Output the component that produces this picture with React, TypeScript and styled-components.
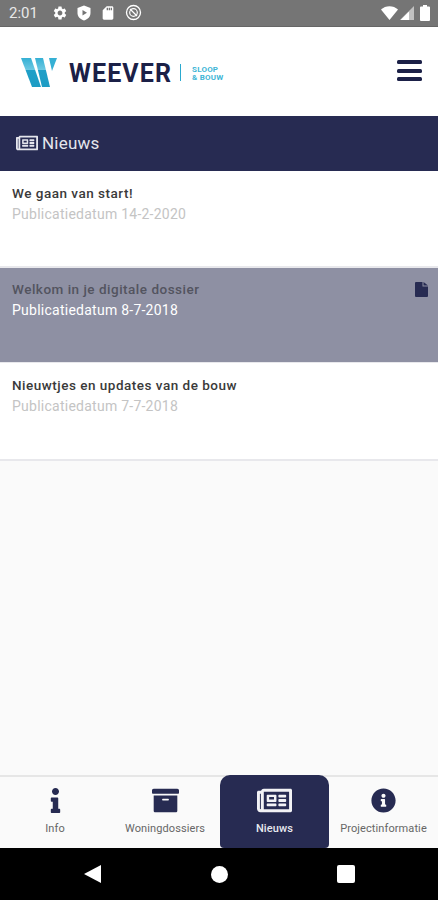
import React from 'react';
import styled, { createGlobalStyle } from 'styled-components';
import { FaArchive, FaInfo, FaInfoCircle, FaRegNewspaper } from 'react-icons/fa';
import { MdSdCard, MdSettings } from 'react-icons/md';

const NAVY = '#272b52';

const NEWS = [
  { title: 'We gaan van start!', date: '14-2-2020' },
  { title: 'Welkom in je digitale dossier', date: '8-7-2018', active: true },
  { title: 'Nieuwtjes en updates van de bouw', date: '7-7-2018' },
];

const TABS = [
  { label: 'Info', icon: <FaInfo size={25} /> },
  { label: 'Woningdossiers', icon: <FaArchive size={27} /> },
  { label: 'Nieuws', icon: <FaRegNewspaper size={35} />, active: true },
  { label: 'Projectinformatie', icon: <FaInfoCircle size={25} /> },
];

const Logo: React.FC = () => (
  <LogoMark viewBox="0 0 36 29">
    <defs>
      <linearGradient id="stripe" x1="0" y1="0" x2="0" y2="1">
        <stop offset="0" stopColor="#35b0d4" />
        <stop offset="0.4" stopColor="#6cc8e2" />
        <stop offset="0.43" stopColor="#1f9fc8" />
        <stop offset="1" stopColor="#1c9cc4" />
      </linearGradient>
    </defs>
    <polygon points="0,0 10,0 20,29 11,29" fill="url(#stripe)" />
    <polygon points="14,0 22,0 29,29 21,29" fill="url(#stripe)" />
    <polygon points="28,0 36,0 31,13" fill="#35b0d4" />
  </LogoMark>
);

const StatusIcons: React.FC = () => (
  <StatusLeft>
    <MdSettings size={16} />
    <svg width="14" height="16" viewBox="0 0 14 16">
      <path d="M7 0.5 13.5 3v5c0 3.6-2.7 6.3-6.5 7.5C3.2 14.3.5 11.6.5 8V3z" fill="#fff" />
      <path d="M5.5 5v5.5L10 7.8z" fill="#757575" />
    </svg>
    <MdSdCard size={16} />
    <svg width="17" height="17" viewBox="0 0 17 17" fill="none" stroke="#fff">
      <circle cx="8.5" cy="8.5" r="7" strokeWidth="1.3" />
      <circle cx="8.5" cy="8.5" r="3.8" strokeWidth="1.2" />
      <path d="M5 5l7 7" strokeWidth="1.3" />
    </svg>
  </StatusLeft>
);

const StatusRight: React.FC = () => (
  <StatusRightGroup>
    <svg width="17" height="14" viewBox="0 0 17 14"><path d="M0 3.5C4.5-1 12.5-1 17 3.5L8.5 14z" fill="#fff" /></svg>
    <SignalIcon width="14" height="14" viewBox="0 0 14 14">
      <path d="M14 0v14H0z" fill="#fff" fillOpacity="0.55" />
      <path d="M9 6v8H0.5l8-8z" fill="#fff" />
    </SignalIcon>
    <svg width="10" height="16" viewBox="0 0 10 16"><path d="M3 0h4v1.5h2a1 1 0 0 1 1 1V15a1 1 0 0 1-1 1H1a1 1 0 0 1-1-1V2.5a1 1 0 0 1 1-1h2z" fill="#fff" /></svg>
  </StatusRightGroup>
);

const App: React.FC = () => (
  <>
    <GlobalStyle />
    <Screen>
      <StatusBar>
        <StatusGroup>
          <Clock>2:01</Clock>
          <StatusIcons />
        </StatusGroup>
        <StatusRight />
      </StatusBar>
      <Header>
        <Brand>
          <Logo />
          <BrandName>WEEVER</BrandName>
          <BrandDivider />
          <BrandSub>
            <span>SLOOP</span>
            <span>&amp; BOUW</span>
          </BrandSub>
        </Brand>
        <Hamburger>
          <span />
          <span />
          <span />
        </Hamburger>
      </Header>
      <TitleBar>
        <FaRegNewspaper size={22} />
        <Title>Nieuws</Title>
      </TitleBar>
      <Content>
        {NEWS.map((item) => (
          <NewsRow key={item.title} $active={item.active}>
            <NewsText>
              <NewsTitle $active={item.active}>{item.title}</NewsTitle>
              <NewsDate $active={item.active}>Publicatiedatum {item.date}</NewsDate>
            </NewsText>
            {item.active && (
              <FileIcon viewBox="0 0 13 15">
                <path d="M0 1a1 1 0 0 1 1-1h6.5v4.5H13V14a1 1 0 0 1-1 1H1a1 1 0 0 1-1-1z" />
                <path d="M8.5 0 13 3.5H8.5z" />
              </FileIcon>
            )}
          </NewsRow>
        ))}
      </Content>
      <TabBar>
        {TABS.map((tab) => (
          <Tab key={tab.label} $active={tab.active}>
            <TabIcon>{tab.icon}</TabIcon>
            <TabLabel $active={tab.active}>{tab.label}</TabLabel>
          </Tab>
        ))}
      </TabBar>
      <NavBar>
        <svg width="17" height="18" viewBox="0 0 17 18"><path d="M17 0v18L0 9z" fill="#fff" /></svg>
        <NavCircle />
        <NavSquare />
      </NavBar>
    </Screen>
  </>
);

export default App;

const GlobalStyle = createGlobalStyle`
  html, body {
    margin: 0;
    padding: 0;
    background: #fafafa;
  }
  * {
    box-sizing: border-box;
  }
`;

const Screen = styled.div`
  display: flex;
  flex-direction: column;
  width: 438px;
  height: 900px;
  overflow: hidden;
  font-family: Roboto, "Liberation Sans", sans-serif;
  background: #fafafa;
`;

const StatusBar = styled.div`
  display: flex;
  align-items: center;
  justify-content: space-between;
  height: 27px;
  padding: 0 8px 1px 9px;
  background: #757575;
  border-bottom: 1px solid #666;
  color: #fff;
`;

const StatusGroup = styled.div`
  display: flex;
  align-items: center;
  gap: 14px;
`;

const StatusLeft = styled.div`
  display: flex;
  align-items: center;
  gap: 9px;
`;

const StatusRightGroup = styled.div`
  display: flex;
  align-items: center;
  gap: 2px;
`;

const SignalIcon = styled.svg`
  margin-right: 4px;
`;

const Clock = styled.span`
  font-size: 15px;
  color: #e8e8e8;
`;

const Header = styled.div`
  display: flex;
  align-items: center;
  justify-content: space-between;
  height: 89px;
  padding: 0 16px 0 21px;
  background: #fff;
`;

const Brand = styled.div`
  display: flex;
  align-items: center;
  margin-top: 2px;
`;

const LogoMark = styled.svg`
  width: 36px;
  height: 29px;
`;

const BrandName = styled.span`
  margin: 1px 0 0 12px;
  font-size: 25px;
  font-weight: 700;
  letter-spacing: 1.1px;
  color: #1b2047;
`;

const BrandDivider = styled.div`
  width: 1px;
  height: 17px;
  margin: 0 11px 0 8px;
  background: #2aa9cf;
`;

const BrandSub = styled.div`
  display: flex;
  flex-direction: column;
  margin-top: 3px;
  font-size: 8px;
  line-height: 8px;
  font-weight: 700;
  letter-spacing: 0.2px;
  color: #3fb6d6;
`;

const Hamburger = styled.div`
  display: flex;
  flex-direction: column;
  gap: 4.5px;
  margin-bottom: 2px;

  span {
    display: block;
    width: 25px;
    height: 4px;
    border-radius: 1.5px;
    background: #1b2047;
  }
`;

const TitleBar = styled.div`
  display: flex;
  align-items: center;
  gap: 4px;
  height: 55px;
  padding: 0 0 2px 16px;
  background: ${NAVY};
  color: #e4e5ec;
`;

const Title = styled.span`
  font-size: 17px;
  letter-spacing: 0.2px;
`;

const Content = styled.div`
  flex: 1;
  display: grid;
  grid-template-rows: 97px 95px 98px;
  align-content: start;
`;

const NewsRow = styled.div<{ $active?: boolean }>`
  display: flex;
  justify-content: space-between;
  padding: 14px 10px 0 12px;
  background: ${({ $active }) => ($active ? '#8e90a3' : '#fff')};
  border-bottom: 2px solid #e8e8ec;

  &:nth-child(2) {
    padding-top: 13px;
    border-bottom-width: 1px;
  }
`;

const NewsText = styled.div`
  display: flex;
  flex-direction: column;
  gap: 4px;
`;

const NewsTitle = styled.span<{ $active?: boolean }>`
  font-size: 13.5px;
  line-height: 17px;
  font-weight: 500;
  letter-spacing: 0.5px;
  color: ${({ $active }) => ($active ? '#53545f' : '#3a3a3a')};
`;

const NewsDate = styled.span<{ $active?: boolean }>`
  font-size: 14px;
  line-height: 17px;
  letter-spacing: 0.25px;
  color: ${({ $active }) => ($active ? '#fff' : '#c4c4c4')};
`;

const FileIcon = styled.svg`
  width: 13px;
  height: 15px;
  margin-top: 1px;
  fill: ${NAVY};
`;

const TabBar = styled.div`
  display: grid;
  grid-template-columns: 110px 110px 109px 109px;
  height: 73px;
  background: #fafafa;
  border-top: 2px solid #e6e6e6;
`;

const Tab = styled.div<{ $active?: boolean }>`
  display: flex;
  flex-direction: column;
  align-items: center;
  margin-top: -2px;
  height: 73px;
  padding-top: 7px;
  border-radius: 10px 10px 4px 4px;
  background: ${({ $active }) => ($active ? NAVY : 'transparent')};
  color: ${({ $active }) => ($active ? '#f2f2f5' : NAVY)};
`;

const TabIcon = styled.div`
  display: flex;
  align-items: center;
  justify-content: center;
  height: 36px;
  margin-bottom: 4px;
`;

const TabLabel = styled.span<{ $active?: boolean }>`
  font-size: 11px;
  line-height: 14px;
  letter-spacing: 0.1px;
  font-weight: ${({ $active }) => ($active ? 500 : 400)};
  color: ${({ $active }) => ($active ? '#e8e9ef' : '#666')};
`;

const NavBar = styled.div`
  display: grid;
  grid-template-columns: repeat(3, 18px);
  justify-content: center;
  align-items: center;
  justify-items: center;
  column-gap: 109px;
  height: 52px;
  background: #000;
`;

const NavCircle = styled.div`
  width: 17px;
  height: 17px;
  border-radius: 50%;
  background: #fff;
`;

const NavSquare = styled.div`
  width: 18px;
  height: 18px;
  border-radius: 2px;
  background: #fff;
`;
